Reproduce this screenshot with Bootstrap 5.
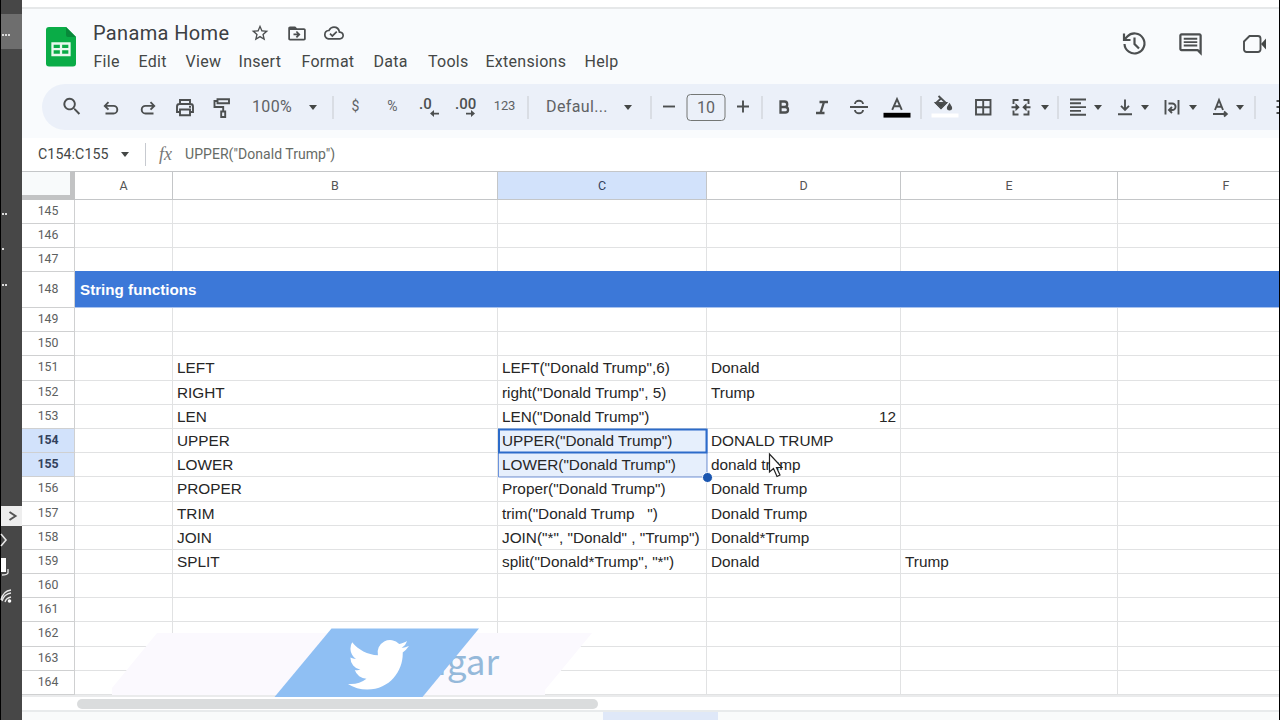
<!DOCTYPE html>
<html lang="en">
<head>
<meta charset="utf-8">
<title>Panama Home</title>
<link href="https://cdn.jsdelivr.net/npm/bootstrap@5.3.0/dist/css/bootstrap.min.css" rel="stylesheet">
<style>
body{width:1280px;height:720px;overflow:hidden;font-family:"Liberation Sans",sans-serif;background:#fff;color:#444746}
svg{display:block;overflow:visible}
.ico{fill:none;stroke:#4c4f50;stroke-width:1.900;flex:none}
.solid{fill:#4c4f50;stroke:none;flex:none}
.dock{width:22px;background:#474747;border-left:1px solid #000}
.dock-tab{height:35px;margin-top:14px;background:#6e6e6e}
.dock-tool{height:20px;margin-top:457px;background:#eee}
.app{border-right:1px solid #000}
.topstrip{height:9px;border-bottom:2px solid #e6e8e9}
.apphead{height:75px;background:#f9fbfd;padding-left:24px}
.logo{margin-top:17px}
.doc-title{font:20px/24px Roboto,sans-serif;letter-spacing:.35px;width:157px;color:#3c4043}
.titles{margin:12px 0 0 17px}
.menus{display:grid;grid-template-columns:45px 47px 53px 63px 72px 54.5px 57.5px 99px 60px;font:16px/20px Roboto,sans-serif;letter-spacing:.28px;margin:7px 0 0 .5px}
.head-actions{margin-right:11px;padding-top:22px;gap:30px}
.toolwrap{background:#f9fbfd;height:54px;padding-left:20px}
.tb{height:46px;background:#ebf0f9;border-radius:23px 0 0 23px;display:grid;align-items:center;padding-left:29.5px;font:16px/20px Roboto,sans-serif;letter-spacing:.35px;color:#5f6265;
grid-template-columns:39.5px 37px 36.5px 37px 50.5px 41px 20px 22.5px 37px 36.5px 37px 38.5px 23.5px 49px 51px 22.5px 18.5px 37px 37px 19px 22px 37.5px 37px 38.5px 23.5px 24px 38.5px 38px 24px 13px 19.5px 20.5px 27px 20px 27px 21px 27px 20px 15px 23px 1px}
.tb>*{justify-self:start;transform:translateX(-50%);white-space:nowrap}
.rule-v{width:1px;height:23px;background:#c7cad0}
.dn{width:0;height:0;border:4.5px solid transparent;border-top:5px solid #444746;border-bottom:0}
.size{width:39px;height:27px;border:1px solid #747775;border-radius:4px;text-align:center;line-height:25px;letter-spacing:0}
.sm{font-size:14px;letter-spacing:0}
.num{font-size:13px;letter-spacing:-.2px}
.tb>.up{position:relative;top:-1px}
.fbar{height:33px;font:14.2px/33px Roboto,sans-serif}
.namebox{width:83px;padding-left:16px;letter-spacing:.1px}
.fx{font:italic 18px/33px "Liberation Serif",serif;color:#777;margin-left:13px;width:26px}
.formula{font-size:14px;color:#666b66;letter-spacing:.05px}
.grid-row{display:grid;grid-template-columns:53px 98px 325px 209px 194px 217px 161px;height:24.2px}
.grid-row>div{border-right:1px solid #e1e2e3;border-bottom:1px solid #e1e2e3;white-space:pre;padding:1px 4px 0;color:#262626;font-size:15.350px;line-height:21px;overflow:hidden}
.grid-row>div:last-child{border-right:0}
.grid-row>.rn{font:12.300px/23px Roboto,sans-serif;text-align:center;color:#5c6060;border-color:#cfd0d1;padding:0}
.grid-row.early{height:24px}
.grid-row.band{height:37px;margin-top:-1px}
.grid-row.band>.rn{line-height:37px;border-top:1px solid #cfd0d1;padding:0;line-height:35px}
.grid-row.band>.bandcell{grid-column:2/8;background:#3c78d8;border-color:#a9c3ee;color:#fff;font-weight:700;line-height:35px;font-size:15.200px;padding-left:5px}
.grid-row.heads{height:29px}
.grid-row.heads>div{font:12.500px/27px Roboto,sans-serif;text-align:center;border-top:1px solid #c4c6c8;border-bottom-color:#c4c6c8;border-right-color:#c4c6c8;color:#555;padding:0}
.grid-row.heads>.corner{background:#f8fafb;border-right:5px solid #c2c3c4;border-bottom:5px solid #c2c3c4}
.grid-row.heads>.cut{padding-left:55px}
.grid-row.heads>.on,.grid-row>.rn.on{background:#d2e2fb;color:#33415c}
.grid-row>.rn.on{font-weight:700}
.grid-row>.sel{background:#e6effc}
.scroller{height:17px;background:#fff;border-top:2px solid #eaebec;border-bottom:2px solid #e8ebec;padding:2px 0 0 55px}
.thumb{width:521px;height:10px;border-radius:5px;background:#dadcdd}
.tabs{height:8px;background:#f9fbfb;padding-left:581px}
.tab-on{width:115px;background:#dfe8f8}
.over{left:0;top:0;pointer-events:none}
.handle-text{font-family:"Noto Sans CJK SC",sans-serif;font-size:35px;fill:#95b9da}
</style>
</head>
<body class="d-flex position-relative">
<aside class="dock flex-shrink-0"><div class="dock-tab"></div><div class="dock-tool"></div></aside>
<main class="app flex-grow-1 overflow-hidden">
<div class="topstrip"></div>
<header class="apphead d-flex align-items-start">
  <svg class="logo" width="30" height="41" viewBox="0 0 30 41"><path d="M3 1h17l10 10v26.500a3 3 0 0 1-3 3H3a3 3 0 0 1-3-3V4a3 3 0 0 1 3-3z" fill="#0aac47"/><path d="M20 1l10 10h-8a2 2 0 0 1-2-2z" fill="#08893a"/><path d="M6.500 17.500h17v11.500H6.500zM6.500 23.200h17M15 17.500v11.500" fill="none" stroke="#e9f8ee" stroke-width="2.300"/></svg>
  <div class="titles">
    <div class="d-flex align-items-center">
      <div class="doc-title">Panama Home</div>
      <svg class="solid" width="20" height="20" viewBox="0 0 24 24"><path d="M22 9.240l-7.190-.620L12 2 9.190 8.630 2 9.240l5.460 4.730L5.820 21 12 17.270 18.180 21l-1.630-7.030L22 9.240zM12 15.400l-3.760 2.270 1-4.280-3.320-2.880 4.380-.380L12 6.100l1.710 4.040 4.380.380-3.320 2.880 1 4.280L12 15.400z"/></svg>
      <svg class="solid ms-3" width="22" height="21" viewBox="0 0 24 24"><path fill-rule="evenodd" d="M20 6h-8l-2-2H4c-1.100 0-2 .9-2 2v12c0 1.100.9 2 2 2h16c1.100 0 2-.9 2-2V8c0-1.100-.9-2-2-2zm0 12H4V8h16v10z"/><path d="M12 17l4-4-4-4-1.400 1.400 1.600 1.600H8v2h4.200l-1.600 1.600z"/></svg>
      <svg class="solid ms-3" width="20" height="20" viewBox="0 0 24 24"><path fill-rule="evenodd" d="M19.350 10.040A7.490 7.490 0 0 0 12 4C9.110 4 6.600 5.640 5.350 8.040A5.994 5.994 0 0 0 0 14c0 3.310 2.690 6 6 6h13c2.760 0 5-2.240 5-5 0-2.640-2.050-4.780-4.650-4.960zM19 18H6c-2.210 0-4-1.790-4-4 0-2.050 1.530-3.760 3.560-3.970l1.070-.110.5-.950A5.469 5.469 0 0 1 12 6c2.620 0 4.880 1.860 5.390 4.430l.3 1.500 1.530.110A2.980 2.980 0 0 1 22 15c0 1.650-1.350 3-3 3z"/><path d="M10 14.200l-2.100-2.100-1.400 1.400L10 17l6-6-1.400-1.400z"/></svg>
    </div>
    <nav class="menus"><span>File</span><span>Edit</span><span>View</span><span>Insert</span><span>Format</span><span>Data</span><span>Tools</span><span>Extensions</span><span>Help</span></nav>
  </div>
  <div class="head-actions d-flex ms-auto">
    <svg class="ico" width="26" height="26" viewBox="0 0 26 26"><path d="M3.500 13a10 10 0 1 0 2.800-7.500L4 8M3 2.500v6.500h6.500M13.500 6.500V13l4.500 4.500" stroke-width="2.200"/></svg>
    <svg class="solid" width="27" height="27" viewBox="0 0 24 24"><path fill-rule="evenodd" d="M22 4c0-1.100-.9-2-2-2H4c-1.100 0-2 .9-2 2v12c0 1.100.9 2 2 2h14l4 4V4zM20 4v13.200L18.800 16H4V4h16z"/><path d="M6 12h12v1.700H6zM6 9h12v1.700H6zM6 6h12v1.700H6z"/></svg>
    <svg class="ico ms-2" width="26" height="26" viewBox="0 0 26 26"><path d="M7.500 5H16a2.500 2.500 0 0 1 2.500 2.500v11A2.500 2.500 0 0 1 16 21H4.500A2.500 2.500 0 0 1 2 18.500V10.500z"/><path d="M19 13l5-5.500v11z" fill="#444746" stroke="none"/></svg>
  </div>
</header>
<div class="toolwrap"><div class="tb">
  <svg class="solid up" width="23" height="23" viewBox="0 0 24 24"><path d="M15.500 14h-.8l-.3-.3A6.500 6.500 0 1 0 13.700 14.400l.3.3v.8l5 5L20.500 19zm-6 0a4.500 4.500 0 1 1 0-9 4.500 4.500 0 0 1 0 9z"/></svg>
  <svg class="ico" width="22" height="22" viewBox="0 0 22 22"><path d="M5.500 17.500h8a3.800 3.800 0 0 0 0-7.600H5M8.500 6.200L4.800 9.900l3.700 3.700"/></svg>
  <svg class="ico" width="22" height="22" viewBox="0 0 22 22"><path d="M16.500 17.500h-8a3.800 3.800 0 0 1 0-7.600H17M13.500 6.200l3.700 3.700-3.700 3.700"/></svg>
  <svg class="ico" width="22" height="22" viewBox="0 0 22 22"><path d="M6 7.500V4h10v3.500M5.500 16H3v-5.500A2.500 2.500 0 0 1 5.500 8h11a2.500 2.500 0 0 1 2.500 2.500V16h-2.500M6 13.500h10v5.700H6z"/><path d="M15 10.700h2"/></svg>
  <svg class="ico" width="22" height="22" viewBox="0 0 22 22"><path d="M6.500 3.200H18v4H6.500zM6.500 5H3.500v6h8.700v4.500M10.200 15.500h4v5.500h-4z"/></svg>
  <span>100%</span><i class="dn"></i><i class="rule-v"></i>
  <span class="sm up">$</span><span class="sm up">%</span>
  <svg class="solid" width="22" height="22" viewBox="0 0 22 22"><text x="1" y="12.500" font-size="15" font-weight="500" font-family="Roboto" letter-spacing="0">.0</text><path d="M21 16.700h-5v-2.600l-4 3.500 4 3.500v-2.600h5z"/></svg>
  <svg class="solid" width="22" height="22" viewBox="0 0 22 22"><text x="0" y="12.500" font-size="15" font-weight="500" font-family="Roboto" letter-spacing="0">.00</text><path d="M11 16.700h5v-2.600l4 3.500-4 3.500v-2.600h-5z"/></svg>
  <span class="num up">123</span><i class="rule-v"></i>
  <span>Defaul...</span><i class="dn"></i><i class="rule-v"></i>
  <svg class="ico" width="12" height="12" viewBox="0 0 12 12"><path d="M0 5.500h12"/></svg>
  <div class="size">10</div>
  <svg class="ico" width="12" height="12" viewBox="0 0 12 12"><path d="M0 5.500h12M6 -.5v12"/></svg>
  <i class="rule-v"></i>
  <svg class="ico" width="22" height="22" viewBox="0 0 22 22"><path d="M7.500 5.500h4a2.700 2.700 0 0 1 0 5.500h-4zM7.500 11h4.800a2.700 2.700 0 0 1 0 5.500H7.500z" style="stroke-width:2.300"/></svg>
  <svg class="ico" width="22" height="22" viewBox="0 0 22 22"><path d="M8.500 6h8.500M5 17h8.500M13 6l-3.500 11" style="stroke-width:2.300"/></svg>
  <svg class="ico" width="22" height="22" viewBox="0 0 22 22"><path d="M2 11h18M15 8a4 3.300 0 0 0-8 0M7 14a4 3.300 0 0 0 8 0"/></svg>
  <svg class="ico" width="27" height="26" viewBox="0 0 27 26"><path d="M8.700 15.800L13.500 5l4.800 10.800M10.300 12.300h6.400"/><path d="M0 21.200h27" style="stroke:#000;stroke-width:4.800"/></svg>
  <i class="rule-v"></i>
  <svg class="ico" width="27" height="26" viewBox="0 0 27 26"><path d="M7 2l7.500 7-5 5-5-5L10 4"/><path d="M4.500 9h10l-5 5.200zM18 10.500c-2.500 3.500-2 5 0 5s2.500-1.500 0-5z" fill="#444746"/><path d="M0 21.500h27" style="stroke:#fff;stroke-width:4"/></svg>
  <svg class="ico" width="22" height="22" viewBox="0 0 22 22"><path d="M4 4h14.500v14.500H4zM11.200 4v14.500M4 11.200h14.500"/></svg>
  <svg class="ico" width="22" height="22" viewBox="0 0 22 22"><path d="M8.500 4H3.500v4M13.500 4h5v4M3.500 14.500v4h5M18.500 14.500v4h-5M1.500 11.200h5M15.500 11.200h5"/><path d="M5.500 7.200l4.200 4-4.200 4zM16.500 7.200l-4.200 4 4.200 4z" fill="#444746" style="stroke:none"/></svg>
  <i class="dn"></i><i class="rule-v"></i>
  <svg class="ico" width="22" height="22" viewBox="0 0 22 22"><path d="M3 3.500h16M3 7.300h11M3 11.100h16M3 14.900h11M3 18.700h16"/></svg>
  <i class="dn"></i>
  <svg class="ico" width="22" height="22" viewBox="0 0 22 22"><path d="M4 18.300h14M11 3.500v9.500M7 9.800l4 4 4-4"/></svg>
  <i class="dn"></i>
  <svg class="ico" width="22" height="22" viewBox="0 0 22 22"><path d="M4.500 4v14.500M17.500 4v14.500M7.500 7.500h3.800a3.200 3.200 0 0 1 0 6.500H9M11 11l-3 3 3 3"/></svg>
  <i class="dn"></i>
  <svg class="ico" width="22" height="22" viewBox="0 0 22 22"><path d="M6 14L10 4l4 10M7.300 10.700h5.400M4 18h13M15 15.500l2.800 2.500-2.800 2.500"/></svg>
  <i class="dn"></i><i class="rule-v"></i>
  <svg class="ico" width="6" height="22" viewBox="0 0 6 22"><path d="M1.500 5h3M1.500 11h3M1.500 17h3"/></svg>
</div></div>
<div class="fbar d-flex align-items-center">
  <div class="namebox flex-shrink-0">C154:C155</div><i class="dn ms-3 me-3"></i><i class="rule-v"></i>
  <div class="fx">fx</div><div class="formula">UPPER("Donald Trump")</div>
</div>
<div class="grid-row heads"><div class="corner"></div><div>A</div><div>B</div><div class="on">C</div><div>D</div><div>E</div><div class="cut">F</div></div>
<div id="rows"></div>
<div class="scroller"><div class="thumb"></div></div>
<div class="tabs d-flex"><div class="tab-on"></div></div>
</main>
<svg class="over position-absolute" width="1280" height="720" viewBox="0 0 1280 720">
  <g fill="none" stroke="#e8e8e8" stroke-width="1.600"><path d="M9.500 512l6 4-6 4" stroke="#555" stroke-width="2"/><path d="M1 534l5 6-5 6"/><path d="M8 569v4q-1 2-6 2M1 600q2-9 10-10M2 601q2-7 9-8M5 602q1-4 6-5" stroke-width="1.300"/></g>
  <path d="M1 558h5v14H1z" fill="#fff"/><circle cx="9.500" cy="601" r="1.800" fill="#fff"/>
  <path d="M2 35h8M2 214h6M2 249h2M2 285h6" stroke="#ddd" stroke-width="2" stroke-dasharray="2 1"/>
  <path d="M498.500 477H707V429" fill="none" stroke="#6c93dd"/><path d="M498.500 453v24" stroke="#6c93dd"/>
  <path d="M499 429.500h207.500v23H499z" fill="none" stroke="#2c6bc9" stroke-width="2"/>
  <circle cx="707.500" cy="477.500" r="5" fill="#1a56b0" stroke="#fff"/>
  <path d="M769.500 454v18l4-3.500 3.500 8 3-1.500-3.500-7.500h5.500z" fill="#fff" stroke="#222" stroke-width="1.200"/>
  <path d="M157 633h435l-47 57v5H112v-7z" fill="#fbf9fe"/>
  <text class="handle-text" x="437" y="674.500">igar</text>
  <path d="M331.500 628.500H479L422.500 697h-148z" fill="#8fbff3"/>
  <path transform="translate(348 634.300) scale(2.540)" fill="#fff" d="M23.953 4.570a10 10 0 0 1-2.825.775 4.958 4.958 0 0 0 2.163-2.723c-.951.555-2.005.959-3.127 1.184a4.920 4.920 0 0 0-8.384 4.482C7.690 8.095 4.067 6.130 1.640 3.162a4.822 4.822 0 0 0-.666 2.475c0 1.710.870 3.213 2.188 4.096a4.904 4.904 0 0 1-2.228-.616v.060a4.923 4.923 0 0 0 3.946 4.827 4.996 4.996 0 0 1-2.212.085 4.936 4.936 0 0 0 4.604 3.417 9.867 9.867 0 0 1-6.102 2.105c-.390 0-.779-.023-1.170-.067a13.995 13.995 0 0 0 7.557 2.209c9.053 0 13.998-7.496 13.998-13.985 0-.210 0-.420-.015-.630A9.935 9.935 0 0 0 24 4.590z"/>
</svg>
<script>
// Cell text by row number, columns B to E
const cells = {
  151: ['LEFT', 'LEFT("Donald Trump",6)', 'Donald'],
  152: ['RIGHT', 'right("Donald Trump", 5)', 'Trump'],
  153: ['LEN', 'LEN("Donald Trump")', '12'],
  154: ['UPPER', 'UPPER("Donald Trump")', 'DONALD TRUMP'],
  155: ['LOWER', 'LOWER("Donald Trump")', 'donald trump'],
  156: ['PROPER', 'Proper("Donald Trump")', 'Donald Trump'],
  157: ['TRIM', 'trim("Donald Trump   ")', 'Donald Trump'],
  158: ['JOIN', 'JOIN("*", "Donald" , "Trump")', 'Donald*Trump'],
  159: ['SPLIT', 'split("Donald*Trump", "*")', 'Donald', 'Trump']
};
let html = '';
for (let n = 145; n <= 164; n++) {
  if (n === 148) {
    html += '<div class="grid-row band"><div class="rn">148</div><div class="bandcell">String functions</div></div>';
    continue;
  }
  const on = n === 154 || n === 155, c = cells[n] || [];
  html += `<div class="grid-row ${n < 148 ? 'early' : ''}"><div class="rn ${on ? 'on' : ''}">${n}</div><div></div>` +
    `<div>${c[0] || ''}</div><div class="${on ? 'sel' : ''}">${c[1] || ''}</div>` +
    `<div class="${n === 153 ? 'text-end' : ''}">${c[2] || ''}</div><div>${c[3] || ''}</div><div></div></div>`;
}
document.getElementById('rows').innerHTML = html;
</script>
<script src="https://cdn.jsdelivr.net/npm/bootstrap@5.3.0/dist/js/bootstrap.bundle.min.js"></script>
</body>
</html>
